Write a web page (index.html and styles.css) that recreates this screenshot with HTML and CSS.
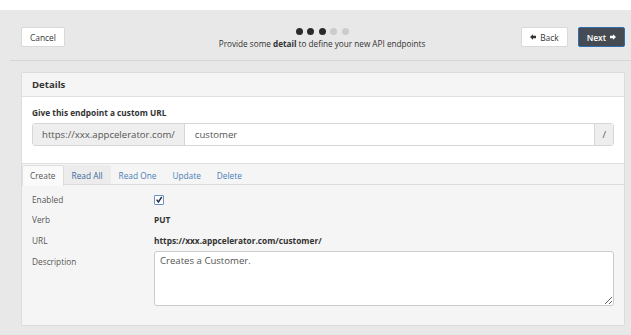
FILE: index.html
```html
<!DOCTYPE html>
<html lang="en">

<head>
    <meta charset="UTF-8">
    <title>New API Endpoint</title>
    <link rel="stylesheet" href="styles.css">
</head>

<body>
    <div class="page">
        <div class="wizard-header">
            <button class="btn">Cancel</button>
            <div class="wizard-step">
                <div class="dots">
                    <span class="dot done"></span>
                    <span class="dot done"></span>
                    <span class="dot done"></span>
                    <span class="dot"></span>
                    <span class="dot"></span>
                </div>
                <div class="step-text">Provide some <b>detail</b> to define your new API endpoints</div>
            </div>
            <div class="nav-buttons">
                <button class="btn">
                    <svg class="arrow" viewBox="0 0 10 10"><path d="M0 5 L5 0.5 V3 H10 V7 H5 V9.5 Z" fill="#333"/></svg>
                    Back
                </button>
                <button class="btn btn-next">
                    Next
                    <svg class="arrow" viewBox="0 0 10 10"><path d="M10 5 L5 0.5 V3 H0 V7 H5 V9.5 Z" fill="#fff"/></svg>
                </button>
            </div>
        </div>

        <div class="panel">
            <div class="panel-heading">Details</div>
            <div class="panel-body">
                <label class="field-label">Give this endpoint a custom URL</label>
                <div class="input-group">
                    <span class="addon">https://xxx.appcelerator.com/</span>
                    <input type="text" class="url-input" value="customer">
                    <span class="addon addon-end">/</span>
                </div>
            </div>
            <div class="tabs-area">
                <ul class="tabs">
                    <li class="tab active">Create</li>
                    <li class="tab hover">Read All</li>
                    <li class="tab">Read One</li>
                    <li class="tab">Update</li>
                    <li class="tab">Delete</li>
                </ul>
                <div class="tab-content">
                    <div class="row">
                        <div class="row-label">Enabled</div>
                        <div class="row-value">
                            <span class="checkbox">
                                <svg viewBox="0 0 10 10"><path d="M2 4.5 L4.3 7.5 L8.5 1" fill="none" stroke="#1f2d44" stroke-width="1.8"/></svg>
                            </span>
                        </div>
                    </div>
                    <div class="row">
                        <div class="row-label">Verb</div>
                        <div class="row-value strong">PUT</div>
                    </div>
                    <div class="row">
                        <div class="row-label">URL</div>
                        <div class="row-value strong">https://xxx.appcelerator.com/customer/</div>
                    </div>
                    <div class="row row-desc">
                        <div class="row-label">Description</div>
                        <div class="row-value">
                            <textarea class="desc">Creates a Customer.</textarea>
                        </div>
                    </div>
                </div>
            </div>
        </div>
    </div>
</body>

</html>
```

FILE: styles.css
```css
body {
    margin: 0;
    background-color: #fff;
    font-family: "Open Sans", Arial, sans-serif;
    font-size: 8.3px;
    color: #555;
}

.page {
    margin-top: 10px;
    height: 325px;
    background-color: #e8e8e8;
    overflow: hidden;
}

.wizard-header {
    display: flex;
    align-items: flex-start;
    justify-content: space-between;
    margin-left: 10px;
    padding: 17px 6px 0 11px;
    height: 33px;
    border-bottom: 1px solid #d6d6d6;
}

.btn {
    height: 20px;
    padding: 0 8px;
    background-color: #fff;
    border: 1px solid #d9d9d9;
    border-radius: 2px;
    font-family: inherit;
    font-size: 8.4px;
    color: #333;
    display: flex;
    align-items: center;
    gap: 4px;
    cursor: pointer;
}

.btn-next {
    background-color: #464a52;
    border-color: #2f6fae;
    color: #fff;
    font-weight: 600;
}

.arrow {
    width: 6px;
    height: 6px;
}

.nav-buttons {
    display: flex;
    gap: 10px;
}

.wizard-step {
    text-align: center;
    padding-top: 1px;
    margin-left: 58px;
}

.dots {
    display: flex;
    justify-content: center;
    gap: 4.5px;
    height: 8px;
}

.dot {
    width: 7px;
    height: 7px;
    border-radius: 50%;
    background-color: #ccc;
}

.dot.done {
    background-color: #2b2b2b;
}

.step-text {
    margin-top: 2px;
    color: #333;
    font-size: 8.2px;
}

.panel {
    margin: 11px 6px 0 21px;
    background-color: #fff;
    border: 1px solid #dcdcdc;
    border-radius: 2px;
}

.panel-heading {
    height: 23px;
    line-height: 23px;
    padding-left: 10px;
    background-color: #f5f5f5;
    border-bottom: 1px solid #e0e0e0;
    font-weight: bold;
    font-size: 9.6px;
    color: #333;
}

.panel-body {
    padding: 10px 10px 17px 10px;
}

.field-label {
    display: block;
    font-weight: bold;
    font-size: 8.3px;
    color: #333;
    margin-bottom: 5px;
}

.input-group {
    display: flex;
    height: 23px;
    border: 1px solid #d6d6d6;
    border-radius: 3px;
    box-sizing: border-box;
    font-size: 9.6px;
}

.addon {
    display: flex;
    align-items: center;
    padding: 0 9px;
    background-color: #eee;
    color: #555;
    border-right: 1px solid #d6d6d6;
}

.addon-end {
    border-right: none;
    border-left: 1px solid #d6d6d6;
    padding: 0 7px;
}

.url-input {
    flex: 1;
    border: none;
    padding: 0 10px;
    font-family: inherit;
    font-size: 9.6px;
    color: #555;
    outline: none;
}

.tabs-area {
    background-color: #f5f5f5;
    border-top: 1px solid #e0e0e0;
    padding-bottom: 19px;
}

.tabs {
    display: flex;
    list-style: none;
    margin: 0;
    padding: 1px 0 0 0;
    border-bottom: 1px solid #ddd;
    height: 19px;
}

.tab {
    padding: 0 7px;
    line-height: 19px;
    color: #4a7fb8;
    border: 1px solid transparent;
    border-bottom: none;
    border-radius: 2px 2px 0 0;
}

.tab.active {
    background-color: #fafafa;
    border-color: #ddd;
    color: #555;
    height: 20px;
}

.tab.hover {
    background-color: #ececec;
    color: #3b6a9c;
}

.tab-content {
    padding: 4px 10px 0 10px;
}

.row {
    display: flex;
    align-items: center;
    height: 20.5px;
}

.row-label {
    width: 122px;
    flex-shrink: 0;
}

.row-value {
    flex: 1;
}

.strong {
    font-weight: bold;
    color: #333;
}

.checkbox {
    display: inline-block;
    width: 8px;
    height: 8px;
    border: 1px solid #6d8fc7;
    border-radius: 1px;
    background-color: #fff;
    vertical-align: middle;
    margin-top: -2px;
}

.checkbox svg {
    display: block;
    width: 8px;
    height: 8px;
}

.row-desc {
    align-items: flex-start;
    height: auto;
}

.row-desc .row-label {
    padding-top: 5px;
}

.desc {
    display: block;
    width: 100%;
    height: 55px;
    box-sizing: border-box;
    border: 1px solid #ccc;
    border-radius: 3px;
    padding: 2px 5px;
    font-family: inherit;
    font-size: 9.6px;
    color: #555;
    resize: vertical;
}
```
